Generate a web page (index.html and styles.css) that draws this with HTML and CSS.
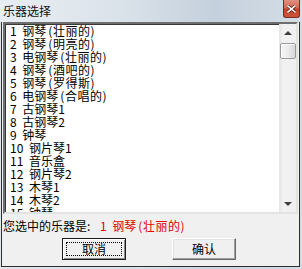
FILE: index.html
```html
<!DOCTYPE html>
<html lang="zh">
<head>
<meta charset="utf-8">
<title>乐器选择</title>
<link rel="stylesheet" href="styles.css">
</head>
<body>
<div class="window">
  <div class="titlebar">
    <span class="title">乐器选择</span>
    <span class="close">
      <svg width="9" height="8" viewBox="0 0 9 8"><path d="M1 1 L8 7 M8 1 L1 7" stroke="#5a1a10" stroke-width="3" stroke-linecap="square"/><path d="M1 1 L8 7 M8 1 L1 7" stroke="#fff" stroke-width="1.6" stroke-linecap="square"/></svg>
    </span>
  </div>
  <div class="client">
    <div class="listbox">
      <ul class="items">
        <li>1 钢琴<span class="p">(壮丽的)</span></li>
        <li>2 钢琴<span class="p">(明亮的)</span></li>
        <li>3 电钢琴<span class="p">(壮丽的)</span></li>
        <li>4 钢琴<span class="p">(酒吧的)</span></li>
        <li>5 钢琴<span class="p">(罗得斯)</span></li>
        <li>6 电钢琴<span class="p">(合唱的)</span></li>
        <li>7 古钢琴1</li>
        <li>8 古钢琴2</li>
        <li>9 钟琴</li>
        <li>10 钢片琴1</li>
        <li>11 音乐盒</li>
        <li>12 钢片琴2</li>
        <li>13 木琴1</li>
        <li>14 木琴2</li>
        <li>15 钟琴</li>
      </ul>
      <div class="scrollbar">
        <div class="sb-btn"><span class="arrow-up"></span></div>
        <div class="sb-track">
          <div class="sb-thumb"></div>
        </div>
        <div class="sb-btn"><span class="arrow-down"></span></div>
      </div>
    </div>
    <div class="status">
      <span class="status-label">您选中的乐器是:</span>
      <span class="status-value">1 钢琴<span class="p">(壮丽的)</span></span>
    </div>
    <div class="buttons">
      <button class="btn btn-default"><span class="focus">取消</span></button>
      <button class="btn"><span class="plain">确认</span></button>
    </div>
  </div>
</div>
</body>
</html>
```
FILE: styles.css
```css
* { box-sizing: border-box; }
html, body {
  margin: 0;
  padding: 0;
}
body {
  width: 302px;
  height: 269px;
  overflow: hidden;
  font-family: "Noto Sans CJK SC", "Noto Sans", sans-serif;
  font-size: 12px;
  color: #000;
  background: linear-gradient(to right, #dfe6ec 0%, #d8e0e8 45%, #c9d4df 70%, #d3dce5 100%);
}
.window {
  width: 302px;
  height: 269px;
  display: flex;
  flex-direction: column;
}
.titlebar {
  height: 22px;
  display: flex;
  align-items: flex-start;
  justify-content: space-between;
  background: linear-gradient(to right, rgba(235,240,245,0.7) 0%, rgba(220,228,236,0.3) 40%, rgba(190,204,218,0.45) 72%, rgba(215,224,233,0.4) 100%);
}
.title {
  margin: 3px 0 0 3px;
  line-height: 16px;
  font-size: 12px;
  color: #111;
}
.close {
  width: 17px;
  height: 18px;
  margin-right: 2px;
  border: 1px solid #7a2a1e;
  border-top: none;
  border-radius: 0 0 3px 3px;
  background: linear-gradient(to bottom, #e0907f 0%, #d56a55 45%, #c2432c 55%, #c9553c 100%);
  display: flex;
  align-items: center;
  justify-content: center;
}
.client {
  margin: 0 2px 2px 1px;
  width: 299px;
  height: 245px;
  background: #f0f0f0;
  border: 1px solid #2e2e2e;
  border-top: none;
  display: flex;
  flex-direction: column;
}
.listbox {
  margin: 0 1px 0 1px;
  height: 192px;
  flex: none;
  background: #fff;
  border-top: 2px solid #6e6e6e;
  border-left: 2px solid #6e6e6e;
  border-right: 2px solid #e3e3e3;
  border-bottom: 2px solid #e3e3e3;
  box-shadow: inset 1px 1px 0 #3a3a3a;
  display: flex;
  overflow: hidden;
}
.items {
  list-style: none;
  margin: 0;
  padding: 0 0 0 5px;
  flex: 1;
  overflow: hidden;
}
.items li {
  height: 13px;
  line-height: 13px;
  white-space: pre;
  word-spacing: 3px;
}
.p {
  margin-left: 2px;
  letter-spacing: 0.5px;
}
.scrollbar {
  width: 17px;
  display: flex;
  flex-direction: column;
  background: linear-gradient(to right, #e6e6e6 0%, #f2f2f2 20%, #efefef 100%);
  border-left: 1px solid #e8e8e8;
}
.sb-btn {
  height: 17px;
  flex: none;
  display: flex;
  align-items: center;
  justify-content: center;
}
.arrow-up {
  width: 0;
  height: 0;
  border-left: 4px solid transparent;
  border-right: 4px solid transparent;
  border-bottom: 4px solid #3e3e3e;
}
.arrow-down {
  width: 0;
  height: 0;
  border-left: 4px solid transparent;
  border-right: 4px solid transparent;
  border-top: 4px solid #3e3e3e;
}
.sb-track {
  flex: 1;
  padding: 2px 0 0 0;
}
.sb-thumb {
  width: 16px;
  height: 16px;
  border: 1px solid #9b9b9b;
  border-radius: 2px;
  background: linear-gradient(to right, #f6f6f6 0%, #ececec 50%, #d6d6d6 100%);
  box-shadow: inset 1px 1px 0 #fff;
}
.status {
  height: 24px;
  flex: none;
  display: flex;
  align-items: center;
  padding-left: 1px;
  white-space: pre;
  line-height: 14px;
}
.status-label {
  width: 97px;
  word-spacing: 3px;
}
.status-value {
  color: #e00000;
  word-spacing: 3px;
}
.buttons {
  display: flex;
  flex: none;
  padding-left: 60px;
  gap: 46px;
}
.btn {
  width: 64px;
  height: 22px;
  padding: 0;
  margin: 0;
  font: inherit;
  line-height: 12px;
  color: #000;
  background: #f0f0f0;
  border: 1px solid;
  border-color: #ffffff #696969 #696969 #ffffff;
  box-shadow: inset -1px -1px 0 #a0a0a0, inset 1px 1px 0 #e3e3e3;
  display: flex;
}
.btn-default {
  border: 1px solid #1a1a1a;
  box-shadow: inset 1px 1px 0 #fff, inset -1px -1px 0 #8a8a8a;
  padding: 3px;
}
.focus {
  flex: 1;
  border: 1px dotted #000;
  display: flex;
  align-items: center;
  justify-content: center;
  line-height: 12px;
}
.plain {
  flex: 1;
  display: flex;
  align-items: center;
  justify-content: center;
  line-height: 12px;
}
```
